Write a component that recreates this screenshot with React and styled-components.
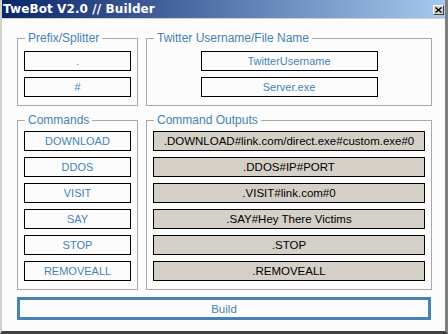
import React from 'react';
import styled, { createGlobalStyle } from 'styled-components';

const GlobalStyle = createGlobalStyle`
    html, body {
        margin: 0;
        padding: 0;
        background: #ffffff;
    }
    * {
        box-sizing: border-box;
    }
`;

const Window = styled.div`
    width: 448px;
    height: 334px;
    display: flex;
    flex-direction: column;
    background: #fcfcfc;
    border-left: 2px solid #d4d0c8;
    border-right: 3px solid #808080;
    border-bottom: 3px solid #404040;
    font-family: "Liberation Sans", Arial, sans-serif;
    overflow: hidden;
`;

const TitleBar = styled.div`
    height: 19px;
    margin-left: -2px;
    margin-right: -3px;
    padding: 0 4px 0 3px;
    display: flex;
    align-items: center;
    justify-content: space-between;
    background: linear-gradient(to right, #0a246a, #a6caf0);
    border-bottom: 1px solid #d4d0c8;
`;

const Title = styled.span`
    color: #ffffff;
    font-family: "DejaVu Sans", Verdana, sans-serif;
    font-weight: bold;
    font-size: 12px;
    letter-spacing: 0.1px;
`;

const CloseButton = styled.div`
    width: 11px;
    height: 10px;
    margin-top: 1px;
    background: #d4d0c8;
    border: 1px solid;
    border-color: #ffffff #404040 #404040 #ffffff;
    display: flex;
    align-items: center;
    justify-content: center;
`;

const Body = styled.div`
    flex: 1;
    padding: 12px 14px 0 15px;
    display: flex;
    flex-direction: column;
`;

const Row = styled.div`
    display: grid;
    grid-template-columns: 121px 286px;
    column-gap: 8px;
    margin-bottom: ${props => props.gap || 0}px;
`;

const Group = styled.fieldset`
    margin: 0;
    border: 1px solid #a8a8a8;
    padding: ${props => props.top || 6}px 6px ${props => props.bottom || 8}px 6px;
    display: flex;
    flex-direction: column;
    align-items: ${props => props.center ? 'center' : 'stretch'};
    gap: 6px;
    min-width: 0;
`;

const Legend = styled.legend`
    color: #4682b4;
    font-size: 12px;
    line-height: 14px;
    padding: 0 3px;
    margin-left: 1px;
`;

const Field = styled.div`
    height: 20px;
    width: ${props => props.width ? props.width + 'px' : 'auto'};
    border: 1px solid #000000;
    background: #fcfcfc;
    color: #4682b4;
    font-size: 11px;
    display: flex;
    align-items: center;
    justify-content: center;
`;

const CommandButton = styled(Field)`
    font-size: 11px;
`;

const Output = styled(Field)`
    background: #d4d0c8;
    color: #000000;
    font-size: 11.5px;
    border-width: 1.5px;
`;

const BuildButton = styled.div`
    height: 23px;
    border: 3px solid #4682b4;
    background: #fcfcfc;
    color: #4682b4;
    font-size: 11.5px;
    display: flex;
    align-items: center;
    justify-content: center;
`;

const commands = ['DOWNLOAD', 'DDOS', 'VISIT', 'SAY', 'STOP', 'REMOVEALL'];

const outputs = [
    '.DOWNLOAD#link.com/direct.exe#custom.exe#0',
    '.DDOS#IP#PORT',
    '.VISIT#link.com#0',
    '.SAY#Hey There Victims',
    '.STOP',
    '.REMOVEALL',
];

export default function App() {
    return (
        <>
            <GlobalStyle />
            <Window>
                <TitleBar>
                    <Title>TweBot V2.0 // Builder</Title>
                    <CloseButton>
                        <svg width="7" height="6" viewBox="0 0 7 6">
                            <path d="M0.5 0.5 L6.5 5.5 M6.5 0.5 L0.5 5.5" stroke="#000" strokeWidth="1.3" />
                        </svg>
                    </CloseButton>
                </TitleBar>
                <Body>
                    <Row gap={7}>
                        <Group>
                            <Legend>Prefix/Splitter</Legend>
                            <Field>.</Field>
                            <Field>#</Field>
                        </Group>
                        <Group center>
                            <Legend>Twitter Username/File Name</Legend>
                            <Field width={177}>TwitterUsername</Field>
                            <Field width={177}>Server.exe</Field>
                        </Group>
                    </Row>
                    <Row gap={7}>
                        <Group top={4}>
                            <Legend>Commands</Legend>
                            {commands.map(c => (
                                <CommandButton key={c}>{c}</CommandButton>
                            ))}
                        </Group>
                        <Group top={4}>
                            <Legend>Command Outputs</Legend>
                            {outputs.map(o => (
                                <Output key={o}>{o}</Output>
                            ))}
                        </Group>
                    </Row>
                    <BuildButton>Build</BuildButton>
                </Body>
            </Window>
        </>
    );
}
